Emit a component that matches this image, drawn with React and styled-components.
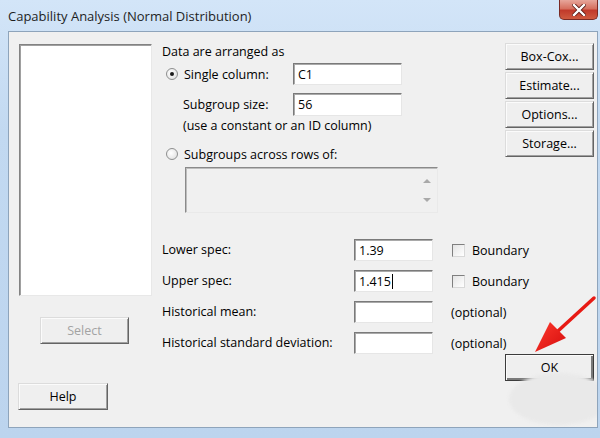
import React from "react";
import styled, { createGlobalStyle } from "styled-components";

const GlobalStyle = createGlobalStyle`
  html, body {
    margin: 0;
    padding: 0;
    background: #bcd4ee;
  }
  * {
    box-sizing: border-box;
  }
`;

const FONT = `"Open Sans", "Noto Sans", sans-serif`;

const Window = styled.div`
  width: 600px;
  height: 438px;
  display: flex;
  flex-direction: column;
  overflow: hidden;
  background: linear-gradient(180deg, #d3e5f8 0%, #c2d9f1 30%, #bcd4ee 100%);
  font-family: ${FONT};
  font-size: 12.5px;
  color: #000;
`;

const TitleBar = styled.div`
  height: 31px;
  display: flex;
  align-items: flex-start;
  padding-left: 8px;
`;

const Title = styled.div`
  margin-top: 6px;
  font-size: 13px;
  line-height: 20px;
  color: #1e1e1e;
`;

const CloseButton = styled.div`
  margin-left: auto;
  margin-right: 2px;
  width: 39px;
  height: 20px;
  display: flex;
  align-items: center;
  justify-content: center;
  border: 1px solid #7a2a24;
  border-top: none;
  border-radius: 0 0 5px 5px;
  background: linear-gradient(180deg, #e7a69b 0%, #d6705f 45%, #c13a2b 55%, #cf5a3f 100%);
`;

const Client = styled.div`
  position: relative;
  flex: 1;
  margin: 0 2px 10px 8px;
  padding: 12px 3px 0 10px;
  display: flex;
  background: #f0f0f0;
  border: 1px solid #8ea4bb;
  overflow: hidden;
`;

const LeftColumn = styled.div`
  width: 133px;
  display: flex;
  flex-direction: column;
  align-items: flex-start;
`;

const VariableList = styled.div`
  width: 133px;
  height: 252px;
  background: #fff;
  border: 1px solid;
  border-color: #828282 #e8e8e8 #e8e8e8 #828282;
  box-shadow: inset 1px 1px 0 #a0a0a0;
`;

const PushButton = styled.button`
  width: ${(p) => p.$width || 89}px;
  height: 27px;
  margin: 0;
  padding: 0;
  font-family: ${FONT};
  font-size: 12.5px;
  color: ${(p) => (p.disabled ? "#a3a3a3" : "#000")};
  background: #efefef;
  border: 1px solid;
  border-color: #dcdcdc #646464 #646464 #dcdcdc;
  box-shadow: inset 1px 1px 0 #fbfbfb, inset -1px -1px 0 #a0a0a0;
  cursor: default;
`;

const SelectButton = styled(PushButton)`
  margin-top: 21px;
  margin-left: 21px;
`;

const HelpButton = styled(PushButton)`
  margin-top: 39px;
  margin-left: -1px;
  width: 90px;
`;

const MiddleColumn = styled.div`
  width: 342px;
  margin-left: 10px;
  display: flex;
  flex-direction: column;
`;

const Text = styled.div`
  line-height: 16px;
  white-space: nowrap;
  margin-top: ${(p) => p.$top || 0}px;
  padding-left: ${(p) => p.$indent || 0}px;
`;

const FieldRow = styled.div`
  display: grid;
  grid-template-columns: 131px 109px;
  align-items: center;
  height: 22px;
  margin-top: ${(p) => p.$top || 0}px;
`;

const RadioLabel = styled.label`
  display: flex;
  align-items: center;
  gap: 6px;
  height: 16px;
  margin-top: ${(p) => p.$top || 0}px;
  padding-left: 4px;
  white-space: nowrap;
`;

const Radio = styled.span`
  position: relative;
  width: 12px;
  height: 12px;
  flex: none;
  border-radius: 50%;
  border: 1px solid #8e8f8f;
  background: radial-gradient(circle at 40% 40%, #ffffff 0%, #e6e6e6 70%, #d0d0d0 100%);

  &::after {
    content: "";
    display: ${(p) => (p.$checked ? "block" : "none")};
    position: absolute;
    left: 3px;
    top: 3px;
    width: 4px;
    height: 4px;
    border-radius: 50%;
    background: #1a1a1a;
  }
`;

const TextInput = styled.div`
  width: ${(p) => p.$width || 109}px;
  height: ${(p) => p.$height || 22}px;
  padding: 0 0 0 4px;
  display: flex;
  align-items: center;
  background: #fff;
  border: 1px solid;
  border-color: #7a7a7a #e6e6e6 #e6e6e6 #7a7a7a;
  box-shadow: inset 1px 1px 0 #a9a9a9;
  white-space: nowrap;
`;

const Caret = styled.span`
  display: inline-block;
  width: 1px;
  height: 15px;
  margin-left: 1px;
  background: #000;
`;

const RowsBox = styled.div`
  position: relative;
  width: 253px;
  height: 46px;
  margin: 5px 0 0 23px;
  background: #f0f0f0;
  border: 1px solid;
  border-color: #8a8a8a #e9e9e9 #e9e9e9 #8a8a8a;
  box-shadow: inset 1px 1px 0 #bdbdbd;
`;

const ScrollStrip = styled.div`
  position: absolute;
  right: 1px;
  top: 1px;
  bottom: 1px;
  width: 19px;
  display: flex;
  flex-direction: column;
  align-items: center;
  justify-content: space-between;
  padding: 10px 0 9px;
`;

const ScrollArrow = styled.span`
  width: 0;
  height: 0;
  border-left: 4px solid transparent;
  border-right: 4px solid transparent;
  ${(p) =>
    p.$down ? "border-top: 4px solid #a9a9a9;" : "border-bottom: 4px solid #a9a9a9;"}
`;

const SpecGrid = styled.div`
  display: grid;
  grid-template-columns: 192px 79px auto;
  grid-auto-rows: 22px;
  row-gap: 9px;
  align-items: center;
  margin-top: 26px;
`;

const SpecExtra = styled.div`
  margin-left: 18px;
  white-space: nowrap;
`;

const CheckLabel = styled.label`
  display: flex;
  align-items: center;
  gap: 7px;
  margin-left: 19px;
  white-space: nowrap;
`;

const CheckBox = styled.span`
  width: 13px;
  height: 13px;
  flex: none;
  border: 1px solid;
  border-color: #7f7f7f #d8d8d8 #d8d8d8 #7f7f7f;
  background: linear-gradient(135deg, #e4e4e4, #ffffff);
`;

const RightColumn = styled.div`
  margin-left: auto;
  margin-top: -1px;
  display: flex;
  flex-direction: column;
  gap: 2px;
`;

const OkButton = styled(PushButton)`
  margin-top: 195px;
  border-color: #3c3c3c;
  box-shadow: inset 1px 1px 0 #fbfbfb, inset -2px -2px 0 #7a7a7a;
`;

const Smudge = styled.div`
  position: absolute;
  left: 500px;
  top: 341px;
  width: 100px;
  height: 52px;
  border-radius: 50%;
  background: #e9e9e9;
  filter: blur(1.5px);
`;

const Overlay = styled.svg`
  position: absolute;
  left: 0;
  top: 0;
  pointer-events: none;
`;

const specs = [
  { label: "Lower spec:", value: "1.39", extra: "check" },
  { label: "Upper spec:", value: "1.415", extra: "check", caret: true },
  { label: "Historical mean:", value: "", extra: "optional" },
  { label: "Historical standard deviation:", value: "", extra: "optional" },
];

const sideButtons = ["Box-Cox...", "Estimate...", "Options...", "Storage..."];

export default function App() {
  return (
    <>
      <GlobalStyle />
      <Window>
        <TitleBar>
          <Title>Capability Analysis (Normal Distribution)</Title>
          <CloseButton>
            <svg width="14" height="12" viewBox="0 0 14 12">
              <path
                d="M2 1 L12 11 M12 1 L2 11"
                stroke="#5a1a14"
                strokeWidth="4"
                strokeLinecap="square"
              />
              <path
                d="M2 1 L12 11 M12 1 L2 11"
                stroke="#ffffff"
                strokeWidth="2.4"
                strokeLinecap="square"
              />
            </svg>
          </CloseButton>
        </TitleBar>
        <Client>
          <LeftColumn>
            <VariableList />
            <SelectButton disabled>Select</SelectButton>
            <HelpButton>Help</HelpButton>
          </LeftColumn>

          <MiddleColumn>
            <Text>Data are arranged as</Text>
            <FieldRow $top={3}>
              <RadioLabel>
                <Radio $checked />
                Single column:
              </RadioLabel>
              <TextInput>C1</TextInput>
            </FieldRow>
            <FieldRow $top={8}>
              <Text $indent={21}>Subgroup size:</Text>
              <TextInput $height={23}>56</TextInput>
            </FieldRow>
            <Text $top={3} $indent={21}>
              (use a constant or an ID column)
            </Text>
            <RadioLabel $top={12}>
              <Radio />
              Subgroups across rows of:
            </RadioLabel>
            <RowsBox>
              <ScrollStrip>
                <ScrollArrow />
                <ScrollArrow $down />
              </ScrollStrip>
            </RowsBox>
            <SpecGrid>
              {specs.map((s) => (
                <React.Fragment key={s.label}>
                  <Text>{s.label}</Text>
                  <TextInput $width={79}>
                    {s.value}
                    {s.caret && <Caret />}
                  </TextInput>
                  {s.extra === "check" ? (
                    <CheckLabel>
                      <CheckBox />
                      Boundary
                    </CheckLabel>
                  ) : (
                    <SpecExtra>(optional)</SpecExtra>
                  )}
                </React.Fragment>
              ))}
            </SpecGrid>
          </MiddleColumn>

          <RightColumn>
            {sideButtons.map((b) => (
              <PushButton key={b}>{b}</PushButton>
            ))}
            <OkButton>OK</OkButton>
          </RightColumn>

          <Smudge />
          <Overlay width="590" height="400">
            <defs>
              <linearGradient id="arrowRed" x1="0" y1="0" x2="1" y2="1">
                <stop offset="0" stopColor="#ff3a2e" />
                <stop offset="1" stopColor="#d40c0c" />
              </linearGradient>
            </defs>
            <path
              d="M585 266 L549 299"
              stroke="#e81a14"
              strokeWidth="3.5"
              strokeLinecap="round"
            />
            <polygon points="526,320 541,290 557,306" fill="url(#arrowRed)" />
          </Overlay>
        </Client>
      </Window>
    </>
  );
}
